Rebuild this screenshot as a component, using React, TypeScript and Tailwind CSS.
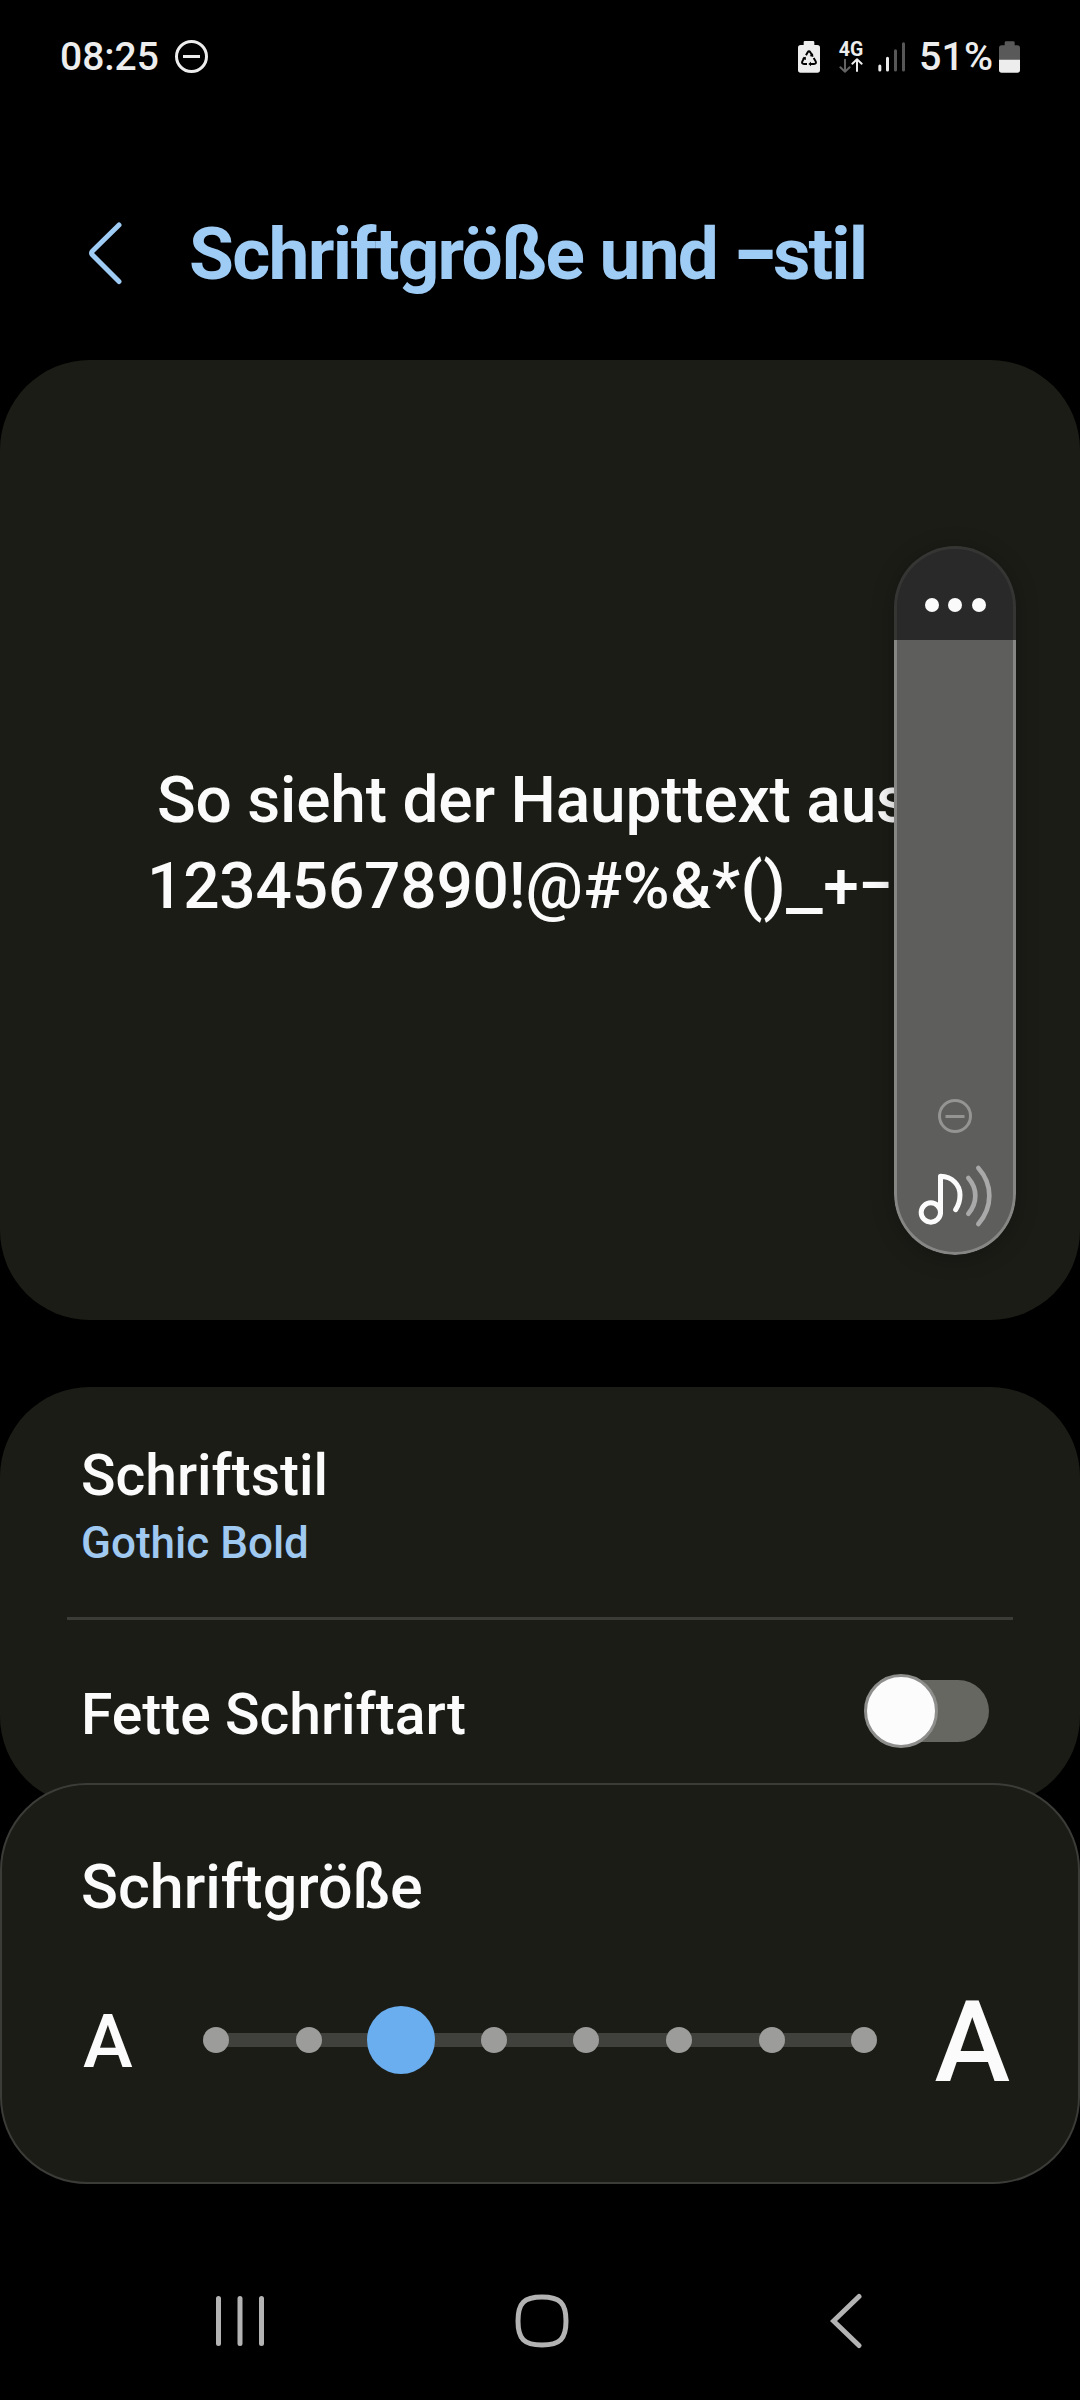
import React from "react";

const STEPS = [0, 1, 2, 3, 4, 5, 6, 7];
const SELECTED_STEP = 2;

function StatusBar() {
  return (
    <div className="flex h-[113px] items-center pl-[60px] pr-[60px] text-[#ededed]">
      <span className="w-[115px] text-[39px] leading-[46px] font-medium">08:25</span>
      <svg width="33" height="33" viewBox="0 0 33 33" fill="none" stroke="currentColor" strokeWidth="3">
        <circle cx="16.5" cy="16.5" r="15" />
        <path d="M8 16.5h17" />
      </svg>
      <div className="ml-auto flex items-center">
        {/* battery protection */}
        <svg className="mr-[18px]" width="22" height="32" viewBox="54 31 66 96">
          <path
            d="M75 31h24a4 4 0 0 1 4 4v8h9a8 8 0 0 1 8 8v67a8 8 0 0 1-8 8H62a8 8 0 0 1-8-8V51a8 8 0 0 1 8-8h9v-8a4 4 0 0 1 4-4z"
            fill="#ededed"
          />
          <g fill="none" stroke="#000" strokeWidth="6">
            <path d="M78 74l5-9q4-6 8 0l6 10" />
            <path d="M74 80l-7 12q-3 8 5 8h9" />
            <path d="M101 82l6 10q3 8-5 8h-12" />
          </g>
          <path d="M99 68l1 11-11-3zM66 83l11-5 1 10zM93 93v14l-8-7z" fill="#000" />
        </svg>
        <div className="mr-[14px] flex w-[26px] flex-col items-center">
          <span className="text-[19.5px] leading-[17px] font-bold">4G</span>
          <svg width="24" height="15" viewBox="179 84 72 45" fill="none" strokeWidth="6" strokeLinecap="round" strokeLinejoin="round">
            <path d="M197 89v36M183 112l14 13 14-13" stroke="#636363" />
            <path d="M233 123V88M219 101l14-13 14 13" stroke="#ededed" />
          </svg>
        </div>
        <svg className="mr-[13px]" width="28" height="30" viewBox="294 32 84 90" fill="none" strokeWidth="9" strokeLinecap="round">
          <path d="M299.500 104v12M322.500 81v35" stroke="#ededed" />
          <path d="M346.500 58v58M370.500 37v79" stroke="#575757" />
        </svg>
        <span className="mr-[6px] text-[39.5px] leading-[46px] font-medium">51%</span>
        <svg width="21" height="32" viewBox="657 31 63 96">
          <path
            d="M678 32h22a4 4 0 0 1 4 4v8h8a8 8 0 0 1 8 8v36h-63V52a8 8 0 0 1 8-8h9v-8a4 4 0 0 1 4-4z"
            fill="#595959"
          />
          <path d="M657 87h63v31a8 8 0 0 1-8 8h-47a8 8 0 0 1-8-8z" fill="#ededed" />
        </svg>
      </div>
    </div>
  );
}

function TitleBar() {
  return (
    <div className="flex h-[247px] items-center pt-[32px] pl-[88px] text-[#9fccf5]">
      <svg width="34" height="64" viewBox="0 0 34 64" fill="none" stroke="currentColor" strokeWidth="5" strokeLinecap="round" strokeLinejoin="round">
        <path d="M31 4L4.500 30q-2 2 0 4L31 60.500" />
      </svg>
      <h1 className="pt-[3px] pl-[67px] text-[73px] leading-[86px] font-bold tracking-[-1.73px] whitespace-nowrap">
        Schriftgröße und{" "}
        <span className="-mr-[4px] inline-block origin-left scale-x-90 font-black">–</span>
        <span className="tracking-[-1.93px]">stil</span>
      </h1>
    </div>
  );
}

function VolumePanel() {
  return (
    <div className="absolute top-[186px] left-[894px] flex h-[709px] w-[122px] flex-col overflow-hidden rounded-[61px] bg-[#292929] shadow-[0_3px_22px_rgba(0,0,0,0.3)]">
      <div className="flex h-[94px] w-full items-center justify-center gap-[9.5px] rounded-t-[61px] border-3 border-b-0 border-[#353533] pt-[20px]">
        <span className="size-[14px] rounded-full bg-[#fafafa]" />
        <span className="size-[14px] rounded-full bg-[#fafafa]" />
        <span className="size-[14px] rounded-full bg-[#fafafa]" />
      </div>
      <div className="flex w-full flex-1 flex-col items-center justify-end rounded-b-[61px] border-3 border-t-0 border-[#868684] bg-[#5e5e5d] pb-[23px]">
        <svg width="34" height="34" viewBox="0 0 34 34" fill="none" stroke="#949493" strokeWidth="3">
          <circle cx="17" cy="17" r="15.500" />
          <path d="M7.500 17.500h19" />
        </svg>
        <svg className="mt-[31px]" width="76" height="65" viewBox="172 312 228 195" fill="none" strokeWidth="15" strokeLinecap="round" strokeLinejoin="round">
          <g stroke="#fbfbfb">
            <circle cx="213.500" cy="457.500" r="29" />
            <path d="M242.500 457V349C278 350 301 374 301 405Q301 429 288 449" />
          </g>
          <g stroke="#a9a9a9" strokeWidth="14">
            <path d="M326 354Q347 378 347 407T326 461" />
            <path d="M356 324Q389 361 389 407T356 492" />
          </g>
        </svg>
      </div>
    </div>
  );
}

function PreviewCard() {
  return (
    <section className="relative h-[960px] rounded-[90px] bg-[#1c1c17] pt-[398px] text-[64px] leading-[86px] font-medium whitespace-nowrap text-[#fbfbfb]">
      <p className="pl-[157px] tracking-[-0.2px]">So sieht der Haupttext aus</p>
      <p className="pl-[147px] tracking-[0.5px]">
        <span className="tracking-[-0.2px]">1234567890!</span>@#%&amp;*()
        <span className="mr-[8px] inline-block origin-left scale-x-[1.28]">_</span>+
        <span className="inline-block origin-left scale-x-[0.8]">–</span>
      </p>
      <VolumePanel />
    </section>
  );
}

function StyleCard() {
  return (
    <section className="mt-[67px] h-[419px] rounded-[90px] bg-[#1c1c17] font-medium">
      <div className="h-[230px] pt-[56px] pl-[81px]">
        <div className="text-[57px] leading-[66px] text-[#fbfbfb]">Schriftstil</div>
        <div className="mt-[9px] text-[44px] leading-[50px] text-[#9fc9f0]">Gothic Bold</div>
      </div>
      <div className="mx-[67px] h-[3px] bg-[#3b3c37]" />
      <div className="flex h-[182px] items-center justify-between pr-[91px] pl-[81px]">
        <span className="pt-[7px] text-[57px] leading-[66px] text-[#fbfbfb]">Fette Schriftart</span>
        <div className="relative h-[62px] w-[118px] rounded-full bg-[#666760]">
          <span className="absolute -top-[6px] -left-[7px] size-[74px] rounded-full border-3 border-[#8e8e8d] bg-[#fcfcfc]" />
        </div>
      </div>
    </section>
  );
}

function SizeCard() {
  return (
    <section className="relative -mt-[23px] h-[401px] rounded-[87px] border-2 border-[#3b3b38] bg-[#1c1c17] pt-[67px] pr-[68px] pl-[79px] font-medium text-[#fbfbfb]">
      <h2 className="text-[61px] leading-[70px] font-medium">Schriftgröße</h2>
      <div className="mt-[73px] flex h-[90px] items-center">
        <span className="w-[122px] pt-[2px] pl-[2px] text-[75px] leading-[90px]">A</span>
        <div className="relative flex w-[675px] items-center justify-between">
          <div className="absolute inset-x-[13px] h-[14px] bg-[#40413c]" />
          {STEPS.map((step) => (
            <div key={step} className="relative flex h-[68px] w-[26px] items-center justify-center">
              {step === SELECTED_STEP ? (
                <span className="size-[68px] shrink-0 rounded-full bg-[#6aaeef]" />
              ) : (
                <span className="size-[26px] rounded-full bg-[#9c9c9b]" />
              )}
            </div>
          ))}
        </div>
        <span className="pt-[4px] pl-[57px] text-[114px] leading-[90px]">A</span>
      </div>
    </section>
  );
}

function NavigationBar() {
  return (
    <nav className="flex h-[216px] items-center justify-between pt-[58px] pr-[218px] pl-[216px] text-[#b3b3b3]">
      <svg width="48" height="54" viewBox="0 0 48 54" fill="none" stroke="currentColor" strokeWidth="5" strokeLinecap="round">
        <path d="M2.500 4.500v45M24 4.500v45M45.500 4.500v45" />
      </svg>
      <svg className="mr-[11px]" width="54" height="54" viewBox="0 0 54 54" fill="none" stroke="currentColor" strokeWidth="5">
        <path d="M27 3C45 3 51 9 51 27S45 51 27 51S3 45 3 27S9 3 27 3z" />
      </svg>
      <svg width="32" height="56" viewBox="0 0 32 56" fill="none" stroke="currentColor" strokeWidth="5" strokeLinecap="round">
        <path d="M29 3.500L3.500 28L29 52.500" />
      </svg>
    </nav>
  );
}

export default function App() {
  return (
    <main className="h-[2400px] w-[1080px] overflow-hidden bg-black font-['Roboto',sans-serif]">
      <StatusBar />
      <TitleBar />
      <PreviewCard />
      <StyleCard />
      <SizeCard />
      <NavigationBar />
    </main>
  );
}
